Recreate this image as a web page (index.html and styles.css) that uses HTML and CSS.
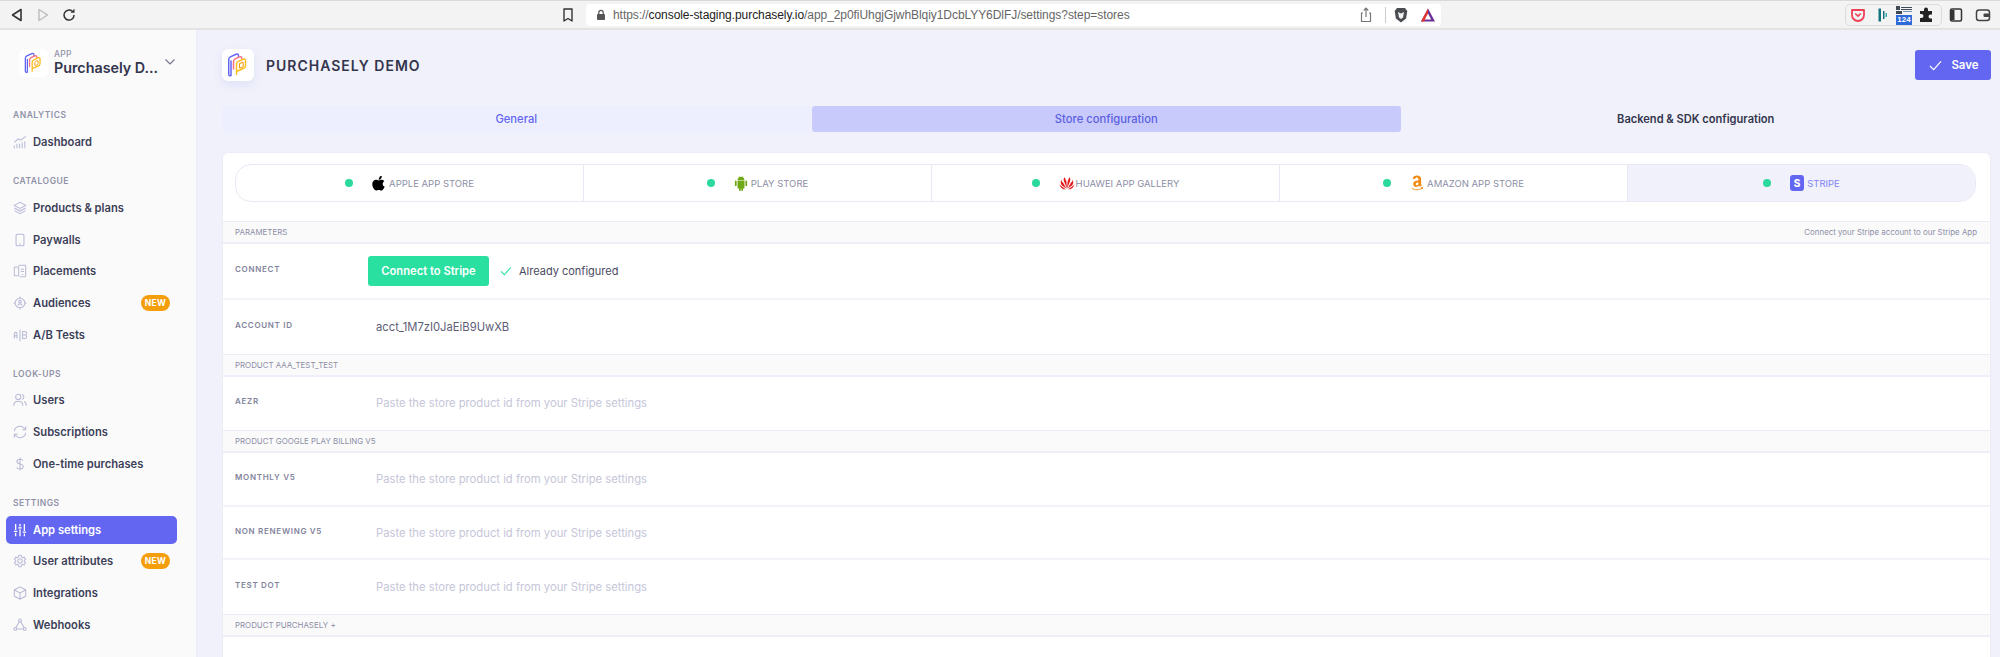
FILE: index.html
```html
<!DOCTYPE html>
<html lang="en">
<head>
<meta charset="utf-8">
<title>Purchasely Demo - Settings</title>
<link rel="stylesheet" href="styles.css">
</head>
<body>
<svg class="defs" width="0" height="0" aria-hidden="true">
  <symbol id="logo" viewBox="0 0 32 32">
    <path d="M9 26.500c-1.200.6-2.300 0-2.300-1.200V10.500c0-1.200.6-2 1.700-2.600L14 5.200c1.400-.6 2.500 0 2.500 1.400V8M9 26.500V12" fill="none" stroke="#6366f1" stroke-width="1.500" stroke-linecap="round"/>
    <path d="M11.500 20V12.500c0-1.200.6-2 1.700-2.600l4.300-2c1.200-.5 2.300 0 2.300 1.300V10" fill="none" stroke="#fb7185" stroke-width="1.500" stroke-linecap="round"/>
    <path d="M14.500 26v-3.500l6.800-3c1.200-.5 2.200-1.300 2.200-2.700V11.500c0-1.300-1-1.800-2.200-1.300l-5 2.200c-1.200.5-1.800 1.300-1.800 2.600v8" fill="none" stroke="#fbbf24" stroke-width="1.500" stroke-linejoin="round"/>
    <path d="M17.500 18.500v-3c0-.6.300-1 .8-1.300l1.700-.8c.7-.3 1.200 0 1.200.7v2.600c0 .6-.3 1-.8 1.300l-1.700.8c-.7.3-1.200 0-1.200-.3z" fill="none" stroke="#f59e0b" stroke-width="1.100"/>
  </symbol>
</svg>

<header class="chrome">
  <div class="chrome-nav">
    <svg class="tb" viewBox="0 0 16 16"><path d="M12 2.500v11L3.500 8z" fill="none" stroke="#333" stroke-width="1.600" stroke-linejoin="round"/></svg>
    <svg class="tb" viewBox="0 0 16 16"><path d="M4 2.500v11L12.500 8z" fill="none" stroke="#bbb" stroke-width="1.400" stroke-linejoin="round"/></svg>
    <svg class="tb" viewBox="0 0 16 16"><path d="M13 8a5 5 0 1 1-1.700-3.700" fill="none" stroke="#333" stroke-width="1.500"/><path d="M13.500 1.800v4h-4z" fill="#333"/></svg>
  </div>
  <svg class="tb bookmark" viewBox="0 0 16 16"><path d="M4 2h8v12l-4-2.500L4 14z" fill="none" stroke="#333" stroke-width="1.400" stroke-linejoin="round"/></svg>
  <div class="url">
    <svg class="lock" viewBox="0 0 12 12"><rect x="2" y="5" width="8" height="6" rx="1" fill="#555"/><path d="M3.800 5V3.500a2.200 2.200 0 0 1 4.400 0V5" fill="none" stroke="#555" stroke-width="1.200"/></svg>
    <span class="url-text">https://<b>console-staging.purchasely.io</b>/app_2p0fiUhgjGjwhBlqiy1DcbLYY6DlFJ/settings?step=stores</span>
    <svg class="tb share" viewBox="0 0 16 16"><path d="M5 6H3.500v8.500h9V6H11M8 10V1.500M5.700 3.500 8 1.200l2.300 2.300" fill="none" stroke="#777" stroke-width="1.200"/></svg>
    <span class="url-sep"></span>
    <svg class="tb" viewBox="0 0 16 16"><path d="M4 1h8l2.300 3-1.200 7.500L8 15.500l-5.100-4L1.700 4z" fill="#4a4d52"/><path d="M5 5 8 6.500 11 5l-1 5.500-2 1.500-2-1.500z" fill="#f3f3f3"/></svg>
    <svg class="tb" viewBox="0 0 16 16"><path d="M8 1.500 1 14.500h14z" fill="#6b2f96"/><path d="M8 1.500 1 14.500h3.200L8 7.500z" fill="#e2352d"/><path d="M8 6.500 4.800 12.500h6.400z" fill="#fff"/></svg>
  </div>
  <div class="ext-box">
    <svg class="tb" viewBox="0 0 16 16"><path d="M2 3h12v5a6 6 0 0 1-12 0z" fill="none" stroke="#ef4056" stroke-width="1.800" stroke-linejoin="round"/><path d="m5.200 6.500 2.800 2.700 2.800-2.700" fill="none" stroke="#ef4056" stroke-width="1.600"/></svg>
    <svg class="tb" viewBox="0 0 16 16"><path d="M4.500 1.500h2.500v13H4.500z" fill="#14747e"/><path d="M9 4h1.500v8H9z" fill="#14747e"/><path d="M11.500 6H13v4h-1.500z" fill="#39aab5"/></svg>
    <div class="ext-qr">
      <svg class="qr" viewBox="0 0 16 8"><path d="M0 0h4v4H0zM5 1h11v1H5zM5 3h11v1H5zM0 5h6v3H0z" fill="#3f4a57"/><path d="M7 5h9v1H7z" fill="#7a93bd"/></svg>
      <span class="ext-badge">124</span>
    </div>
    <svg class="tb" viewBox="0 0 16 16"><path d="M6 2.500a2 2 0 0 1 4 0V4h4v3.500h-1.500a2 2 0 0 0 0 4H14V15H2v-4h1.500a2 2 0 0 0 0-4H2V4h4z" fill="#222"/></svg>
  </div>
  <svg class="tb side-ic" viewBox="0 0 16 16"><rect x="2.500" y="2" width="11" height="12" rx="1.500" fill="none" stroke="#333" stroke-width="1.500"/><path d="M2.500 3h4v10h-4z" fill="#333"/></svg>
  <svg class="tb wallet-ic" viewBox="0 0 16 16"><rect x="1.500" y="3" width="13" height="10.500" rx="2.500" fill="none" stroke="#444" stroke-width="1.500"/><rect x="8.500" y="6.500" width="6" height="3.500" rx="1" fill="#444"/></svg>
</header>

<div class="app">
  <aside class="sidebar">
    <div class="app-switch">
      <svg class="logo-box"><use href="#logo"/></svg>
      <div class="app-name">
        <span class="app-eyebrow">APP</span>
        <span class="app-title">Purchasely D...</span>
      </div>
      <svg class="chev" viewBox="0 0 12 8"><path d="m1.500 1.500 4.500 4.500 4.500-4.500" fill="none" stroke="#74758c" stroke-width="1.200"/></svg>
    </div>

    <nav class="nav-group first">
      <div class="nav-label">ANALYTICS</div>
      <a class="nav-item"><svg class="ni" viewBox="0 0 16 16"><path d="M1.500 15v-3M4.500 15v-5M7.500 15v-5M10.500 15V8.500M13.500 15V7M1.500 8.500 6 4.500l3 1.500 5.500-4.500" fill="none"/></svg><span>Dashboard</span></a>
    </nav>

    <nav class="nav-group">
      <div class="nav-label">CATALOGUE</div>
      <a class="nav-item"><svg class="ni" viewBox="0 0 16 16"><path d="M8 1.500 14.500 5 8 8.500 1.500 5zM1.500 8 8 11.500 14.500 8M1.500 11 8 14.500 14.500 11"/></svg><span>Products &amp; plans</span></a>
      <a class="nav-item"><svg class="ni" viewBox="0 0 16 16"><rect x="3.500" y="1.500" width="9" height="13" rx="1.500"/><path d="M7 12.500h2"/></svg><span>Paywalls</span></a>
      <a class="nav-item"><svg class="ni" viewBox="0 0 16 16"><rect x="1.500" y="3.500" width="5" height="10" rx="1"/><path d="M6.500 2.500a1 1 0 0 1 1-1h6a1 1 0 0 1 1 1v11a1 1 0 0 1-1 1h-6M9 6h3.500M9 8.500h3.500M10 12h1.500"/></svg><span>Placements</span></a>
      <a class="nav-item"><svg class="ni" viewBox="0 0 16 16"><circle cx="8" cy="8" r="5.500"/><circle cx="8" cy="6.500" r="1.500"/><path d="M5.500 11c.5-1.500 1.500-2 2.500-2s2 .5 2.500 2M8 .5v2M8 13.500v2M.5 8h2M13.500 8h2"/></svg><span>Audiences</span><em class="badge">NEW</em></a>
      <a class="nav-item"><svg class="ni" viewBox="0 0 16 16"><path d="M1.500 12V6.500a1.500 1.500 0 0 1 3 0V12M1.500 9h3M8 2v13M11 4h2.500a1.500 1.500 0 0 1 0 4H11h2.500a1.500 1.500 0 0 1 0 4H11z"/></svg><span>A/B Tests</span></a>
    </nav>

    <nav class="nav-group">
      <div class="nav-label">LOOK-UPS</div>
      <a class="nav-item"><svg class="ni" viewBox="0 0 16 16"><circle cx="6" cy="4.500" r="3"/><path d="M.8 14.500c0-3.500 2-5 5.200-5s5.200 1.500 5.200 5M10.500 1.700a3 3 0 0 1 0 5.600M12.500 9.800c1.800.6 2.800 2.200 2.800 4.700"/></svg><span>Users</span></a>
      <a class="nav-item"><svg class="ni" viewBox="0 0 16 16"><path d="M1.500 7a6.500 6.500 0 0 1 11.500-3l1.500 1.500M14.500 1.500v4h-4M14.500 9A6.500 6.500 0 0 1 3 12l-1.500-1.500M1.500 14.500v-4h4"/></svg><span>Subscriptions</span></a>
      <a class="nav-item"><svg class="ni" viewBox="0 0 16 16"><path d="M8 .5v15M11.500 4C11 2.800 9.800 2.500 8 2.500c-2 0-3.500 1-3.500 2.700S6 7.500 8 8s3.700 1.200 3.700 2.900-1.700 2.700-3.700 2.700c-1.800 0-3.200-.5-3.700-1.800"/></svg><span>One-time purchases</span></a>
    </nav>

    <nav class="nav-group">
      <div class="nav-label">SETTINGS</div>
      <a class="nav-item active"><svg class="ni" viewBox="0 0 16 16"><path d="M3 1v7M3 11v4M8 1v3M8 7v8M13 1v8M13 12v3M1 9.500h4M6 5.500h4M11 10.500h4"/></svg><span>App settings</span></a>
      <a class="nav-item"><svg class="ni" viewBox="0 0 16 16"><circle cx="8" cy="8" r="2.500"/><path d="m6.700 1.500-.4 1.800-1.400.8-1.800-.5L1.700 5.800l1.300 1.300v1.800l-1.300 1.300 1.400 2.200 1.800-.5 1.400.8.400 1.800h2.600l.4-1.800 1.400-.8 1.800.5 1.400-2.200-1.300-1.300V7.100l1.300-1.300-1.400-2.200-1.800.5-1.400-.8-.4-1.800z"/></svg><span>User attributes</span><em class="badge">NEW</em></a>
      <a class="nav-item"><svg class="ni" viewBox="0 0 16 16"><path d="M8 1 14.500 4.500v7L8 15l-6.500-3.500v-7zM1.500 4.500 8 8l6.500-3.500M8 8v7"/></svg><span>Integrations</span></a>
      <a class="nav-item"><svg class="ni" viewBox="0 0 16 16"><circle cx="8" cy="2.800" r="1.600"/><circle cx="2.500" cy="12.500" r="1.600"/><circle cx="13.500" cy="12.500" r="1.600"/><path d="M7.200 4.300 3.300 11M8.800 4.300l3.900 6.700M4.100 12.500h7.800"/></svg><span>Webhooks</span></a>
    </nav>
  </aside>

  <main class="main">
    <div class="page-head">
      <svg class="logo-box large"><use href="#logo"/></svg>
      <h1 class="page-title">PURCHASELY DEMO</h1>
      <button class="save"><svg class="save-check" viewBox="0 0 14 12"><path d="m1 6.500 4 4L13 1.500" fill="none" stroke="#fff" stroke-width="1.300"/></svg>Save</button>
    </div>

    <div class="tabs">
      <div class="tab general">General</div>
      <div class="tab current">Store configuration</div>
      <div class="tab plain">Backend &amp; SDK configuration</div>
    </div>

    <section class="card">
      <div class="stores">
        <div class="store"><i class="dot"></i><svg class="brand" viewBox="0 0 16 18"><path d="M11.200 1c.1 1.200-.3 2.200-1 3-.7.800-1.700 1.300-2.600 1.200-.1-1.100.4-2.200 1-2.900C9.300.5 10.400 1 11.200 1zM14.500 13c-.4 1-.6 1.400-1.100 2.200-.7 1.100-1.700 2.400-2.900 2.400-1.100 0-1.400-.7-2.800-.7s-1.800.7-2.900.7c-1.200 0-2.200-1.200-2.900-2.300C.2 12.800-.2 9.200 1.100 7.300c.9-1.300 2.300-2 3.500-2 1.300 0 2.100.7 3.200.7 1 0 1.700-.7 3.200-.7 1.100 0 2.300.6 3.100 1.700-2.800 1.500-2.300 5.400.4 6z" fill="#000"/></svg><span>APPLE APP STORE</span></div>
        <div class="store"><i class="dot"></i><svg class="brand" viewBox="0 0 16 18"><path d="M4 6.200h8v8c0 .6-.4 1-1 1h-.7V17a1 1 0 0 1-2 0v-1.800H7.700V17a1 1 0 0 1-2 0v-1.800H5c-.6 0-1-.4-1-1zM1 7.200a1 1 0 0 1 2 0v4.300a1 1 0 0 1-2 0zM13 7.200a1 1 0 0 1 2 0v4.300a1 1 0 0 1-2 0zM4 5.600C4.100 4 5 2.900 6 2.300L5.300 1l.3-.2.8 1.300a4.300 4.300 0 0 1 3.200 0l.8-1.300.3.200L10 2.300c1 .6 1.900 1.700 2 3.300z" fill="#6fa814"/></svg><span>PLAY STORE</span></div>
        <div class="store"><i class="dot"></i><svg class="brand wide" viewBox="0 0 18 16"><path d="M9 14.500 8.300 6 6.300 1.500C5 2.500 5 4.500 5.500 6zM9 14.500 9.700 6l2-4.500c1.300 1 1.300 3 .8 4.500zM8.300 14.500 4.500 7.500C3 6.500 2.500 5.500 2.800 4 1.300 6 1.500 8.500 3 10.500zM9.700 14.500 13.500 7.500c1.500-1 2-2 1.700-3.500 1.500 2 1.300 4.500-.2 6.500zM7.500 15 2 11.200c-.8-.6-1.200-1.500-1.500-2.200 0 2.500 1.800 5 4.500 6zM10.500 15l5.500-3.800c.8-.6 1.200-1.500 1.500-2.200 0 2.500-1.800 5-4.500 6z" fill="#e41e1e"/></svg><span>HUAWEI APP GALLERY</span></div>
        <div class="store"><i class="dot"></i><svg class="brand" viewBox="0 0 16 18"><path d="M9.700 6.200V5.500c0-1.500-.4-2.700-1.900-2.700-1.200 0-1.800.7-2 1.500L3 4c.4-2.300 2.600-3.500 5-3.500 2.900 0 4.700 1.300 4.700 4.200v5c0 1 .4 1.400.9 2l-2 1.600c-.6-.5-.9-1-1.200-1.500-1 1-1.800 1.500-3.200 1.500-2 0-3.500-1.200-3.500-3.300 0-3.100 3.300-3.700 6-3.800zm0 2.200c-1.500 0-3.100.3-3.100 1.800 0 .9.500 1.400 1.200 1.400 1.500 0 1.900-1.600 1.900-3.200z" fill="#f08a12"/><path d="M2 15c3.500 2.300 8.500 2.300 12-.2M12.500 14.300l2-.3-.3 2" fill="none" stroke="#f08a12" stroke-width="1"/></svg><span>AMAZON APP STORE</span></div>
        <div class="store selected"><i class="dot"></i><b class="stripe-s">S</b><span>STRIPE</span></div>
      </div>

      <div class="sec"><span>PARAMETERS</span><span>Connect your Stripe account to our Stripe App</span></div>
      <div class="row connect">
        <label class="field">CONNECT</label>
        <button class="stripe-btn">Connect to Stripe</button>
        <svg class="ok" viewBox="0 0 14 12"><path d="m1 6.500 4 4L13 1.500" fill="none" stroke="#2ae0a1" stroke-width="1.300"/></svg>
        <span class="ok-text">Already configured</span>
      </div>
      <div class="row account"><label class="field">ACCOUNT ID</label><span class="val id">acct_1M7zI0JaEiB9UwXB</span></div>

      <div class="sec"><span>PRODUCT AAA_TEST_TEST</span></div>
      <div class="row last"><label class="field">AEZR</label><span class="val">Paste the store product id from your Stripe settings</span></div>

      <div class="sec"><span>PRODUCT GOOGLE PLAY BILLING V5</span></div>
      <div class="row"><label class="field">MONTHLY V5</label><span class="val">Paste the store product id from your Stripe settings</span></div>
      <div class="row"><label class="field">NON RENEWING V5</label><span class="val">Paste the store product id from your Stripe settings</span></div>
      <div class="row last short"><label class="field">TEST DOT</label><span class="val">Paste the store product id from your Stripe settings</span></div>

      <div class="sec"><span>PRODUCT PURCHASELY +</span></div>
    </section>
  </main>
</div>
</body>
</html>
```

FILE: styles.css
```css
* { box-sizing: border-box; }
html, body { margin: 0; height: 657px; overflow: hidden; }
body { font-family: Inter, "Liberation Sans", sans-serif; background: #f0f1fa; color: #33354d; display: flex; flex-direction: column; }
.defs { position: absolute; }
a { text-decoration: none; color: inherit; }

.chrome { height: 30px; flex: none; background: #f3f3f3; border-top: 1px solid #d9d9d9; border-bottom: 2px solid #e3e3e3; display: flex; align-items: center; padding-left: 9px; }
.tb { width: 16px; height: 16px; flex: none; display: block; }
.chrome-nav { display: flex; gap: 10px; width: 551px; }
.bookmark { margin-right: 10px; }
.url { width: 855px; height: 22px; background: #fff; border-radius: 4px; display: flex; align-items: center; padding: 0 5px 0 9px; gap: 0; }
.lock { width: 12px; height: 12px; flex: none; margin-right: 6px; }
.url-text { font-family: "Liberation Sans", sans-serif; font-size: 12px; color: #666; flex: 1; white-space: nowrap; letter-spacing: -.06px; }
.url-text b { font-weight: 400; color: #222; }
.share { margin-right: 11px; }
.url-sep { width: 1px; height: 16px; background: #ccc; margin-right: 7px; }
.url .tb:last-child { margin-left: 11px; }
.ext-box { width: 97px; height: 22px; margin-left: 404px; border: 1px solid #dcdcdc; border-radius: 5px; display: flex; align-items: center; justify-content: space-between; padding: 0 4px 0 1px; }
.ext-box .tb { margin: 0 3px; }
.ext-qr { width: 18px; height: 20px; display: flex; flex-direction: column; align-items: center; gap: 1px; }
.qr { width: 16px; height: 8px; margin-top: 1px; }
.ext-badge { width: 16px; height: 10px; background: #2f6bd8; color: #fff; font: 700 8px/10px "Liberation Sans", sans-serif; text-align: center; }
.side-ic { margin-left: 6px; }
.wallet-ic { margin-left: 11px; }

.app { flex: 1; display: flex; min-height: 0; }
.sidebar { width: 197px; flex: none; background: #fafafb; border-right: 1px solid #ebecf5; padding-top: 19px; }
.app-switch { display: flex; align-items: center; padding-left: 19px; height: 28px; }
.logo-box { width: 29px; height: 28px; background: #fff; border-radius: 6px; flex: none; }
.logo-box.large { width: 32px; height: 32px; box-shadow: 0 4px 10px rgba(99,102,241,.1); }
.app-name { display: flex; flex-direction: column; margin-left: 6px; width: 108px; }
.app-eyebrow { font-size: 8.500px; line-height: 10px; font-weight: 500; color: #9092a8; letter-spacing: .2px; }
.app-title { font-size: 14.300px; line-height: 18px; font-weight: 600; color: #33354d; white-space: nowrap; }
.chev { width: 12px; height: 8px; margin-left: 2px; margin-top: -3px; }

.nav-group { margin-top: 18px; display: flex; flex-direction: column; gap: 3.670px; }
.nav-group.first { margin-top: 31px; }
.nav-label { height: 14px; line-height: 14px; font-size: 8.500px; font-weight: 600; letter-spacing: .5px; color: #9092a8; padding-left: 13px; margin-bottom: 2.300px; }
.nav-item { height: 28px; margin: 0 19px 0 6px; padding: 0 7px; border-radius: 5px; display: flex; align-items: center; font-size: 11.200px; font-weight: 600; color: #3d3f58; }
.nav-item span { margin-left: 6px; white-space: nowrap; }
.ni { width: 14px; height: 14px; flex: none; fill: none; stroke: #b9bbd6; stroke-width: 1.200; }
.ni path, .ni circle, .ni rect { fill: none; }
.badge { margin-left: auto; width: 29px; height: 16px; border-radius: 8px; background: #f59e0b; color: #fff; font-style: normal; font-size: 8.500px; line-height: 16px; font-weight: 700; text-align: center; letter-spacing: .3px; }
.nav-item.active { background: #6366f1; color: #fff; }
.nav-item.active .ni { stroke: #fff; stroke-width: 1.500; }

.main { flex: 1; min-width: 0; padding: 19px 9px 0 25px; }
.page-head { display: flex; align-items: center; height: 32px; }
.page-title { margin: 0 0 0 12px; font-size: 14px; font-weight: 600; letter-spacing: 1px; color: #33354d; flex: 1; }
.save { width: 76px; height: 30px; border: 0; border-radius: 3px; background: #6366f1; color: #fff; font: 600 11.500px Inter, sans-serif; display: flex; align-items: center; justify-content: center; gap: 9px; padding: 0 0 0 2px; }
.save-check { width: 13px; height: 11px; }

.tabs { display: flex; margin-top: 25px; height: 26px; }
.tab { width: 589.500px; height: 26px; line-height: 26px; text-align: center; font-size: 11.200px; font-weight: 500; border-radius: 3px; }
.tab.general { background: #eeeffe; color: #6366f1; width: 588.500px; margin-right: 1px; }
.tab.current { background: #c9cafc; color: #5a5fe0; }
.tab.plain { color: #33354d; font-weight: 600; font-size: 11.100px; }

.card { margin-top: 20px; background: #fff; border: 1px solid #ebecf5; border-bottom: 0; border-radius: 6px 6px 0 0; height: 505px; overflow: hidden; }
.stores { margin: 11px 14px 19px 12px; height: 38px; border: 1px solid #e8e9f4; border-radius: 16px; display: flex; overflow: hidden; }
.store { flex: 1; display: flex; align-items: center; justify-content: center; font-size: 9.500px; color: #8d8ea6; border-left: 1px solid #e8e9f4; }
.store:first-child { border-left: 0; }
.store.selected { background: #f0f1fa; color: #8285f4; }
.dot { width: 8px; height: 8px; border-radius: 50%; background: #2bd99c; margin-right: 19px; flex: none; }
.brand { width: 14px; height: 16px; margin-right: 3px; flex: none; }
.brand.wide { width: 16px; height: 14px; margin-right: 1px; }
.stripe-s { width: 14px; height: 16px; background: #6366f1; border-radius: 3px; color: #fff; font-size: 10px; line-height: 16px; font-weight: 800; text-align: center; margin-right: 3px; }

.sec { height: 23px; background: #fafafb; border-top: 1px solid #ebecf5; border-bottom: 2px solid #eeeff8; display: flex; align-items: center; justify-content: space-between; padding: 0 13px 0 12px; font-size: 7.900px; color: #8d8ea6; }
.row { height: 53.670px; display: flex; align-items: center; padding-left: 12px; border-bottom: 2px solid #f3f3f9; }
.row.last, .row.account { border-bottom: 0; }
.row.connect { height: 56px; }
.row.account { height: 53.500px; }
.row.short { height: 53.200px; }
.field { width: 141px; flex: none; font-size: 8px; font-weight: 600; letter-spacing: .7px; color: #83849c; margin-bottom: 4px; }
.val { font-size: 11.240px; color: #c5c6d9; }
.val.id { color: #5d5e76; }
.stripe-btn { width: 121px; height: 30px; margin-left: -8px; border: 0; border-radius: 3px; background: #2ae0a1; color: #fff; font: 600 11.200px Inter, sans-serif; padding: 0; }
.ok { width: 12px; height: 10px; margin: 0 7px 0 11px; flex: none; }
.ok-text { font-size: 11px; color: #4a4b63; }
```
